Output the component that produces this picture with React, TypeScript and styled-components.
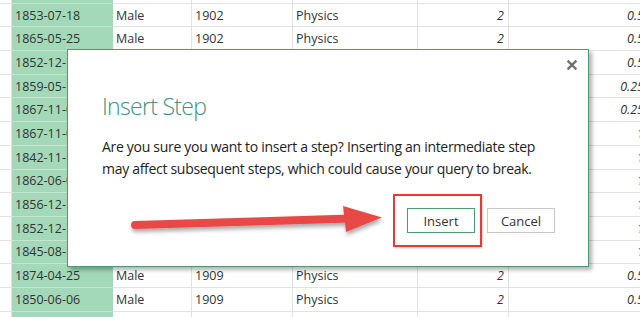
import React from 'react';
import styled, { createGlobalStyle } from 'styled-components';

type Row = [string, string, string, string, string, string];

const rows: Row[] = [
  ['1853-07-01', 'Male', '1902', 'Physics', '2', '0.5'],
  ['1853-07-18', 'Male', '1902', 'Physics', '2', '0.5'],
  ['1865-05-25', 'Male', '1902', 'Physics', '2', '0.5'],
  ['1852-12-15', 'Male', '1903', 'Physics', '2', '0.5'],
  ['1859-05-15', 'Male', '1903', 'Physics', '4', '0.25'],
  ['1867-11-07', 'Female', '1903', 'Physics', '4', '0.25'],
  ['1867-11-07', 'Female', '1911', 'Chemistry', '1', '1'],
  ['1842-11-12', 'Male', '1904', 'Physics', '1', '1'],
  ['1862-06-07', 'Male', '1905', 'Physics', '1', '1'],
  ['1856-12-18', 'Male', '1906', 'Physics', '1', '1'],
  ['1852-12-19', 'Male', '1907', 'Physics', '1', '1'],
  ['1845-08-16', 'Male', '1908', 'Physics', '1', '1'],
  ['1874-04-25', 'Male', '1909', 'Physics', '2', '0.5'],
  ['1850-06-06', 'Male', '1909', 'Physics', '2', '0.5'],
  ['1850-06-06', 'Male', '1909', 'Physics', '2', '0.5'],
];

const GlobalStyle = createGlobalStyle`
  html, body {
    margin: 0;
    padding: 0;
    background: #ffffff;
    overflow: hidden;
  }
`;

const App: React.FC = () => {
  return (
    <>
      <GlobalStyle />
      <Page>
        <Sheet>
          {rows.map((r, i) => (
            <React.Fragment key={i}>
              <Cell />
              <Cell $green>{r[0]}</Cell>
              <Cell>{r[1]}</Cell>
              <Cell>{r[2]}</Cell>
              <Cell>{r[3]}</Cell>
              <Cell $num>{r[4]}</Cell>
              <Cell $num>{r[5]}</Cell>
            </React.Fragment>
          ))}
        </Sheet>

        <Dialog>
          <CloseButton aria-label="Close">
            <svg width="10" height="10" viewBox="0 0 10 10">
              <path d="M1.5 1.5 L8.5 8.5 M8.5 1.5 L1.5 8.5" stroke="#6f6f6f" strokeWidth="2.4" strokeLinecap="square" />
            </svg>
          </CloseButton>
          <Title>Insert Step</Title>
          <Message>
            Are you sure you want to insert a step? Inserting an intermediate step
            may affect subsequent steps, which could cause your query to break.
          </Message>
          <ButtonRow>
            <DialogButton $primary>Insert</DialogButton>
            <DialogButton>Cancel</DialogButton>
          </ButtonRow>
        </Dialog>

        <Highlight />
        <Arrow width="270" height="40" viewBox="0 0 270 40">
          <defs>
            <filter id="arrowShadow" x="-5%" y="-30%" width="110%" height="180%">
              <feDropShadow dx="1" dy="3" stdDeviation="2" floodColor="#000" floodOpacity="0.35" />
            </filter>
          </defs>
          <g filter="url(#arrowShadow)">
            <path d="M14 24 L230 17.5" stroke="#e84a47" strokeWidth="8" strokeLinecap="round" />
            <path d="M222 5 L261 16.5 L225 31 Z" fill="#e84a47" />
          </g>
        </Arrow>
      </Page>
    </>
  );
};

export default App;

const Page = styled.div`
  position: relative;
  width: 640px;
  height: 317px;
  overflow: hidden;
  background: #ffffff;
`;

const Sheet = styled.div`
  display: grid;
  grid-template-columns: 12px 101px 79px 101px 125px 91px 140px;
  grid-auto-rows: 23.7px;
  margin-top: -20px;
  font-family: 'Open Sans', 'Noto Sans', sans-serif;
  font-size: 12.5px;
  color: #333333;
`;

const Cell = styled.div<{ $green?: boolean; $num?: boolean }>`
  display: flex;
  align-items: center;
  justify-content: ${(p) => (p.$num ? 'flex-end' : 'flex-start')};
  padding: 0 ${(p) => (p.$num ? '4px' : '3px')} 0 3px;
  border-bottom: 1px solid ${(p) => (p.$green ? '#c4e6d3' : '#e2e2e2')};
  border-right: 1px solid ${(p) => (p.$green ? '#a3d9b9' : '#e2e2e2')};
  background: ${(p) => (p.$green ? '#a3d9b9' : '#ffffff')};
  font-style: ${(p) => (p.$num ? 'italic' : 'normal')};
  white-space: nowrap;
  overflow: hidden;
`;

const Dialog = styled.div`
  position: absolute;
  left: 67px;
  top: 49px;
  width: 522px;
  height: 218px;
  box-sizing: border-box;
  border: 1px solid #4f9a6e;
  background: #ffffff;
  box-shadow: 3px 3px 4px rgba(0, 0, 0, 0.3);
  padding: 40px 30px 0 34px;
  display: flex;
  flex-direction: column;
  font-family: 'Open Sans', 'Noto Sans', sans-serif;
`;

const CloseButton = styled.div`
  position: absolute;
  top: 10px;
  right: 11px;
  width: 10px;
  height: 10px;
  display: flex;
`;

const Title = styled.div`
  font-size: 23px;
  font-weight: 300;
  letter-spacing: -0.7px;
  color: #3f8f80;
  line-height: 32px;
`;

const Message = styled.div`
  margin-top: 14px;
  font-size: 14px;
  letter-spacing: -0.3px;
  line-height: 22px;
  color: #222222;
`;

const ButtonRow = styled.div`
  display: flex;
  justify-content: flex-end;
  gap: 12px;
  margin-top: 28px;
  padding-right: 3px;
`;

const DialogButton = styled.div<{ $primary?: boolean }>`
  width: 68px;
  height: 25px;
  box-sizing: border-box;
  border: 1px solid ${(p) => (p.$primary ? '#4f9a6e' : '#c8c8c8')};
  display: flex;
  align-items: center;
  justify-content: center;
  font-size: 13px;
  color: #333333;
  background: #ffffff;
`;

const Highlight = styled.div`
  position: absolute;
  left: 393px;
  top: 194px;
  width: 89px;
  height: 53px;
  box-sizing: border-box;
  border: 2.5px solid #e5393a;
  box-shadow: 1px 1px 2px rgba(0, 0, 0, 0.2);
`;

const Arrow = styled.svg`
  position: absolute;
  left: 121px;
  top: 201px;
  overflow: visible;
`;
